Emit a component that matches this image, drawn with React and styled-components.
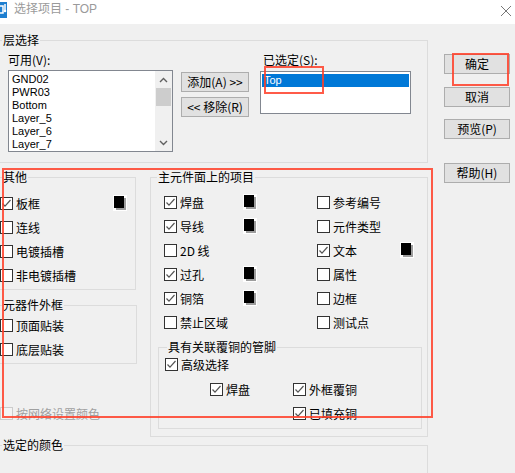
import React from "react"
import styled, { createGlobalStyle } from "styled-components"

const GlobalStyle = createGlobalStyle`
  html, body { margin: 0; padding: 0; background: #f0f0f0; }
  body {
    font-family: "Noto Sans CJK SC", "Noto Sans", sans-serif;
    font-size: 12px;
    color: #000;
  }
  * { box-sizing: border-box; }
`

const Window = styled.div`
  position: relative;
  width: 515px;
  height: 473px;
  overflow: hidden;
  background: #f0f0f0;
`

const TitleBar = styled.div`
  height: 24px;
  background: #fff;
  display: flex;
  align-items: flex-start;
`

const TitleText = styled.div`
  margin-left: 7px;
  line-height: 18px;
  color: #9a9a9a;
  font-family: "Liberation Sans", "Noto Sans CJK SC", sans-serif;
  font-size: 12px;
  flex: 1;
`

const CloseBtn = styled.div`
  width: 12px;
  height: 12px;
  margin: 3px 3px 0 0;
`

const Body = styled.div`
  display: flex;
  align-items: flex-start;
`

const LeftCol = styled.div`
  margin-left: -6px;
  width: 434px;
  display: flex;
  flex-direction: column;
`

const Group = styled.fieldset`
  margin: ${p => p.$mt || 0}px 0 0 ${p => p.$ml || 0}px;
  padding: 0;
  min-width: 0;
  width: ${p => p.$w}px;
  height: ${p => p.$h}px;
  border: 1px solid #dcdcdc;
`

const Legend = styled.legend`
  margin-left: ${p => p.$x}px;
  padding: 0 1px;
  line-height: 16px;
  font-size: 12px;
`

const LayerRow = styled.div`
  display: flex;
  align-items: flex-start;
  padding: 4px 0 0 13px;
`

const Column = styled.div`
  display: flex;
  flex-direction: column;
  margin-left: ${p => p.$ml || 0}px;
  padding-top: ${p => p.$pt || 0}px;
  gap: ${p => p.$gap || 0}px;
`

const FieldLabel = styled.div`
  line-height: 16px;
  padding-left: ${p => p.$pl || 0}px;
  margin-bottom: ${p => p.$mb || 0}px;
`

const ListBox = styled.div`
  width: ${p => p.$w}px;
  height: ${p => p.$h}px;
  background: #fff;
  border: 1px solid #828790;
  display: flex;
`

const ListItems = styled.div`
  flex: 1;
  padding: 2px 1px 0 1px;
  font-family: "Liberation Sans", Arial, sans-serif;
  font-size: 11px;
  line-height: 13px;
  overflow: hidden;
`

const ListItem = styled.div`
  padding-left: 2px;
  height: 13px;
  background: ${p => (p.$selected ? "#0078d7" : "transparent")};
  color: ${p => (p.$selected ? "#fff" : "#000")};
`

const ScrollBar = styled.div`
  width: 17px;
  background: #f0f0f0;
  display: flex;
  flex-direction: column;
  align-items: center;
`

const Arrow = styled.div`
  height: 17px;
  width: 17px;
  display: flex;
  align-items: center;
  justify-content: center;
`

const Thumb = styled.div`
  width: 15px;
  height: 18px;
  background: #cdcdcd;
`

const Track = styled.div`
  flex: 1;
`

const Button = styled.div`
  width: ${p => p.$w}px;
  height: 20px;
  margin-top: ${p => p.$mt || 0}px;
  background: #e1e1e1;
  border: 1px solid #adadad;
  display: flex;
  align-items: center;
  justify-content: center;
  line-height: 16px;
  font-size: 12px;
  white-space: nowrap;
`

const LowerRow = styled.div`
  display: flex;
  align-items: flex-start;
  margin-top: 6px;
`

const SideCol = styled.div`
  display: flex;
  flex-direction: column;
  width: 142px;
`

const CheckGrid = styled.div`
  display: grid;
  grid-template-columns: ${p => p.$cols};
  grid-auto-rows: 24px;
  align-items: center;
  padding: ${p => p.$pt || 0}px 0 0 ${p => p.$pl || 0}px;
`

const Item = styled.div`
  display: flex;
  align-items: center;
  gap: 3px;
  height: ${p => p.$h || 24}px;
  white-space: nowrap;
  color: ${p => (p.$disabled ? "#a0a0a0" : "#000")};
  margin: ${p => p.$m || "0"};
`

const Box = styled.span`
  width: 13px;
  height: 13px;
  flex: none;
  border: 1px solid ${p => (p.$disabled ? "#cccccc" : "#333")};
  background: ${p => (p.$disabled ? "#f4f4f4" : "#fff")};
  display: flex;
  align-items: center;
  justify-content: center;
`

const SwatchOuter = styled.span`
  width: 14px;
  height: 16px;
  background: #fff;
  padding: 1px;
  display: block;
`

const SwatchInner = styled.span`
  display: block;
  width: 10px;
  height: 12px;
  background: #000;
  box-shadow: 2px 2px 0 #9d9d9d;
`

const SubRows = styled.div`
  display: grid;
  grid-template-columns: 83px auto;
  grid-auto-rows: 24px;
  align-items: center;
  padding-left: 51px;
  margin-top: 4px;
`

const RightCol = styled.div`
  margin-left: 16px;
  padding-top: 30px;
  display: flex;
  flex-direction: column;
`

const Mark = styled.div`
  position: absolute;
  left: ${p => p.$x}px;
  top: ${p => p.$y}px;
  width: ${p => p.$w}px;
  height: ${p => p.$h}px;
  border: 2px solid rgba(255, 62, 40, 0.85);
  pointer-events: none;
`

const CheckMark = () => (
  <svg width="11" height="11" viewBox="0 0 11 11">
    <polyline points="1.5,5.5 4,8.2 9.5,2" fill="none" stroke="#555" strokeWidth="1.2" />
  </svg>
)

const Check = ({ checked, disabled, children, h, m }) => (
  <Item $disabled={disabled} $h={h} $m={m}>
    <Box $disabled={disabled}>{checked && <CheckMark />}</Box>
    <span>{children}</span>
  </Item>
)

const Swatch = () => (
  <SwatchOuter>
    <SwatchInner />
  </SwatchOuter>
)

const Chevron = ({ down }) => (
  <svg width="9" height="6" viewBox="0 0 9 6">
    <polyline
      points={down ? "1,1 4.5,4.5 8,1" : "1,5 4.5,1.5 8,5"}
      fill="none"
      stroke="#606060"
      strokeWidth="1.4"
    />
  </svg>
)

const layers = ["GND02", "PWR03", "Bottom", "Layer_5", "Layer_6", "Layer_7"]

const mainItems = [
  ["焊盘", true, true, "参考编号", false, false],
  ["导线", true, true, "元件类型", false, false],
  ["2D 线", false, false, "文本", true, true],
  ["过孔", true, true, "属性", false, false],
  ["铜箔", true, true, "边框", false, false],
  ["禁止区域", false, false, "测试点", false, false],
]

const App = () => (
  <Window>
    <GlobalStyle />
    <TitleBar>
      <svg width="7" height="16" viewBox="0 0 7 16" style={{ marginTop: 2 }}>
        <rect x="0" y="0" width="7" height="16" fill="#1e7fd0" />
        <path d="M0 4 H3 V11 H0 M5 2 V8" stroke="#fff" strokeWidth="1.5" fill="none" />
        <circle cx="5" cy="9" r="1.3" fill="#fff" />
      </svg>
      <TitleText>选择项目 - TOP</TitleText>
      <CloseBtn>
        <svg width="12" height="12" viewBox="0 0 12 12">
          <path d="M1 1 L11 11 M11 1 L1 11" stroke="#777" strokeWidth="1" />
        </svg>
      </CloseBtn>
    </TitleBar>
    <Body>
      <LeftCol>
        <Group $mt={8} $w={434} $h={131}>
          <Legend $x={7}>层选择</Legend>
          <LayerRow>
            <Column>
              <FieldLabel $mb={2}>可用(V):</FieldLabel>
              <ListBox $w={165} $h={82}>
                <ListItems>
                  {layers.map(l => (
                    <ListItem key={l}>{l}</ListItem>
                  ))}
                </ListItems>
                <ScrollBar>
                  <Arrow><Chevron /></Arrow>
                  <Thumb />
                  <Track />
                  <Arrow><Chevron down /></Arrow>
                </ScrollBar>
              </ListBox>
            </Column>
            <Column $ml={8} $pt={20} $gap={5}>
              <Button $w={68}>添加(A) &gt;&gt;</Button>
              <Button $w={68}>&lt;&lt; 移除(R)</Button>
            </Column>
            <Column $ml={11}>
              <FieldLabel $pl={3} $mb={3}>已选定(S):</FieldLabel>
              <ListBox $w={151} $h={43}>
                <ListItems>
                  <ListItem $selected>Top</ListItem>
                </ListItems>
              </ListBox>
            </Column>
          </LayerRow>
        </Group>

        <LowerRow>
          <SideCol>
            <Group $w={142} $h={121}>
              <Legend $x={7}>其他</Legend>
              <CheckGrid $cols="113px 14px" $pt={6} $pl={5}>
                <Check checked>板框</Check>
                <Swatch />
                <Check>连线</Check>
                <span />
                <Check>电镀插槽</Check>
                <span />
                <Check>非电镀插槽</Check>
                <span />
              </CheckGrid>
            </Group>
            <Group $mt={7} $w={143} $h={67}>
              <Legend $x={7}>元器件外框</Legend>
              <CheckGrid $cols="auto" $pl={5}>
                <Check>顶面贴装</Check>
                <Check>底层贴装</Check>
              </CheckGrid>
            </Group>
            <Item $m="37px 0 0 6px" $disabled>
              <Box $disabled />
              <span>按网络设置颜色</span>
            </Item>
          </SideCol>

          <Group $ml={14} $w={278} $h={268}>
            <Legend $x={6}>主元件面上的项目</Legend>
            <CheckGrid $cols="79px 74px 83px 14px" $pt={5} $pl={13}>
              {mainItems.map(([a, ac, as, b, bc, bs]) => (
                <React.Fragment key={a}>
                  <Check checked={ac}>{a}</Check>
                  {as ? <Swatch /> : <span />}
                  <Check checked={bc}>{b}</Check>
                  {bs ? <Swatch /> : <span />}
                </React.Fragment>
              ))}
            </CheckGrid>
            <Group $mt={5} $ml={7} $w={264} $h={90}>
              <Legend $x={8}>具有关联覆铜的管脚</Legend>
              <Check checked h={18} m="0 0 0 6px">高级选择</Check>
              <SubRows>
                <Check checked>焊盘</Check>
                <Check checked>外框覆铜</Check>
                <span />
                <Check checked>已填充铜</Check>
              </SubRows>
            </Group>
          </Group>
        </LowerRow>

        <Group $w={434} $h={60}>
          <Legend $x={7}>选定的颜色</Legend>
        </Group>
      </LeftCol>

      <RightCol>
        <Button $w={66}>确定</Button>
        <Button $w={66} $mt={13}>取消</Button>
        <Button $w={66} $mt={12}>预览(P)</Button>
        <Button $w={66} $mt={24}>帮助(H)</Button>
      </RightCol>
    </Body>

    <Mark $x={2} $y={168} $w={431} $h={250} />
    <Mark $x={264} $y={66} $w={60} $h={28} />
    <Mark $x={452} $y={53} $w={57} $h={33} />
  </Window>
)

export default App
